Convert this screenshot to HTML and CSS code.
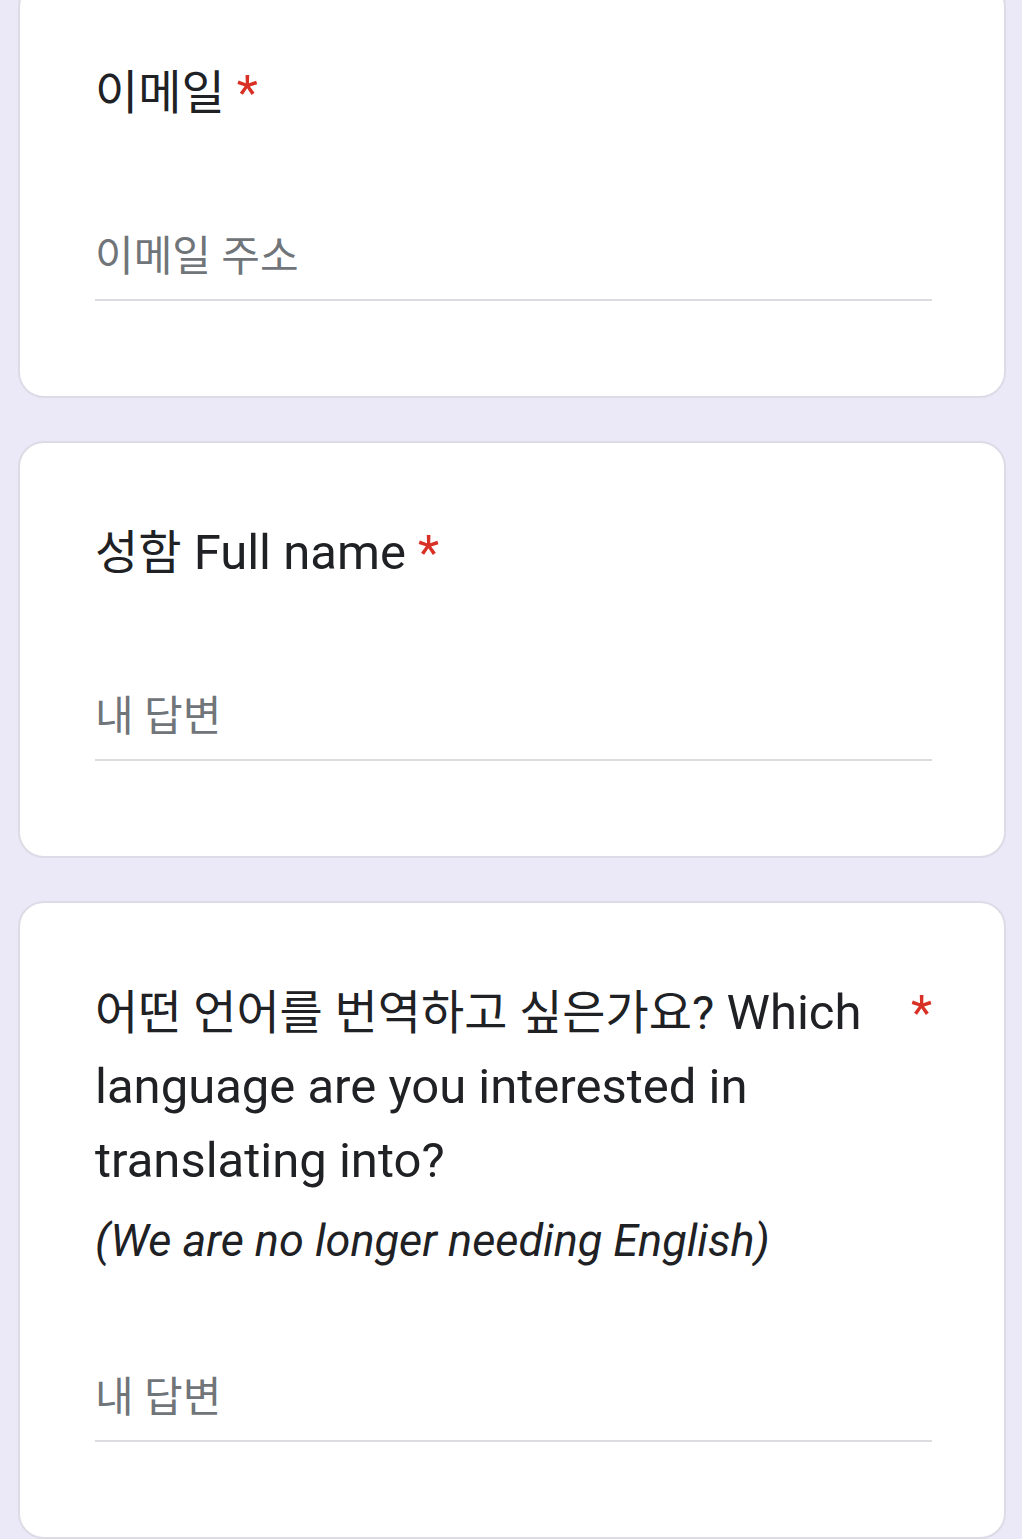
FILE: index.html
```html
<!DOCTYPE html>
<html lang="ko">
<head>
<meta charset="utf-8">
<title>Form</title>
<link rel="stylesheet" href="styles.css">
</head>
<body>
<main class="page">
  <section class="card">
    <div class="title"><span class="title-text"><span class="ko">이메일</span></span><span class="req">*</span></div>
    <div class="field"><span class="placeholder">이메일 주소</span></div>
  </section>
  <section class="card">
    <div class="title"><span class="title-text"><span class="ko">성함</span> Full name</span><span class="req">*</span></div>
    <div class="field"><span class="placeholder">내 답변</span></div>
  </section>
  <section class="card">
    <div class="title"><span class="title-text"><span class="ko">어떤 언어를 번역하고 싶은가요?</span> Which language are you interested in translating into?</span><span class="req">*</span></div>
    <div class="desc">(We are no longer needing English)</div>
    <div class="field"><span class="placeholder">내 답변</span></div>
  </section>
</main>
</body>
</html>
```

FILE: styles.css
```css
html, body {
  margin: 0;
  padding: 0;
}
body {
  background: #ebe8f7;
  font-family: Roboto, "Noto Sans CJK KR", sans-serif;
  color: #202124;
}
.page {
  display: flex;
  flex-direction: column;
  gap: 43px;
  padding: 0 16px 0 18px;
  margin-top: -19px;
}
.card {
  background: #ffffff;
  border: 2px solid #dddbe5;
  border-radius: 26px;
  padding: 73px 72px 95px 75px;
}
.title {
  display: flex;
  align-items: flex-start;
  font-size: 49px;
  line-height: 74px;
  color: #202124;
}
.title-text {
  flex: 0 1 auto;
}
.ko {
  font-size: 47px;
}
.req {
  flex: none;
  color: #d93025;
  padding-left: 12px;
}
.desc {
  margin-top: 15px;
  font-size: 45px;
  line-height: 56px;
  font-style: italic;
  color: #202124;
}
.field {
  margin-top: 99px;
  padding-bottom: 14px;
  border-bottom: 2px solid #dadce0;
  font-size: 42px;
  line-height: 56px;
  color: #70757a;
}
.desc + .field {
  margin-top: 101px;
}
```
